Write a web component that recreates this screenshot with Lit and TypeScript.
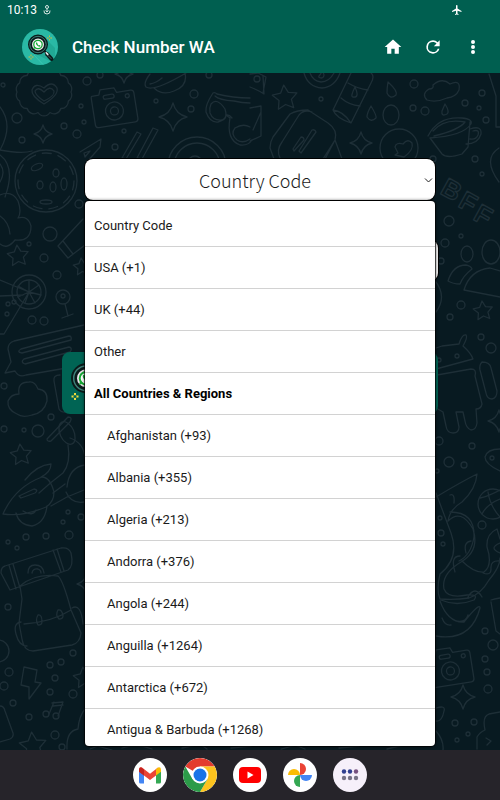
import { LitElement, html, svg, css } from "lit";
import { customElement, property, state } from "lit/decorators.js";
import { classMap } from "lit/directives/class-map.js";

type Dot = [number, number, number];

const DOTS: Dot[] = [
  [87, 81, 4], [3, 85, 2], [17, 118, 5], [64, 126, 3], [81, 106, 2], [84, 122, 2], [77, 134, 4],
  [22, 140, 3], [124, 131, 2], [115, 147, 3], [156, 101, 2], [194, 94, 4], [191, 109, 3],
  [79, 204, 4], [50, 234, 7], [29, 244, 2], [209, 75, 3], [100, 75, 3],
  [414, 84, 4], [321, 99, 2], [413, 108, 3], [425, 111, 4], [482, 93, 3], [465, 103, 3],
  [479, 108, 2], [486, 120, 3], [475, 159, 3], [482, 174, 2], [433, 159, 3], [449, 221, 5],
  [461, 236, 2], [445, 243, 4], [44, 258, 4], [57, 275, 4], [32, 320, 4], [44, 321, 4],
  [4, 386, 3], [51, 417, 3], [4, 429, 3], [24, 430, 2], [38, 431, 6], [441, 261, 3],
  [461, 305, 4], [450, 317, 3], [481, 337, 3], [491, 348, 5], [439, 441, 4], [472, 446, 3],
  [449, 462, 5], [464, 465, 3], [437, 471, 2], [8, 542, 2], [17, 548, 2], [26, 537, 3],
  [46, 536, 3], [69, 535, 4], [68, 512, 2], [63, 522, 2], [81, 517, 3], [8, 607, 3],
  [-2, 651, 11], [73, 653, 3], [61, 662, 3], [50, 665, 3], [55, 678, 3], [9, 672, 4],
  [4, 686, 4], [50, 692, 3], [73, 694, 4], [13, 703, 3], [29, 717, 3], [55, 735, 4],
  [62, 747, 3], [440, 518, 2], [441, 533, 3], [443, 544, 2], [482, 525, 4], [485, 631, 3],
  [493, 645, 5], [485, 659, 3], [487, 672, 3], [488, 689, 4], [455, 723, 3], [474, 722, 3],
  [468, 734, 2], [457, 740, 2],
];

const STARS: Dot[] = [[285, 98, 13], [18, 256, 11], [82, 267, 9], [21, 455, 11], [483, 311, 10], [33, 746, 14], [84, 678, 11]];
const SPARKS: Dot[] = [[43, 134, 9], [173, 117, 14], [361, 143, 11], [463, 697, 12], [499, 421, 11], [124, 74, 9], [86, 584, 9]];

const starPath = ([x, y, r]: Dot) => {
  const pts = Array.from({ length: 10 }, (_, i) => {
    const a = (i * Math.PI) / 5 - Math.PI / 2 - 0.1;
    const d = i % 2 ? r * 0.5 : r;
    return `${(x + d * Math.cos(a)).toFixed(1)} ${(y + d * Math.sin(a)).toFixed(1)}`;
  });
  return `M${pts.join("L")}Z`;
};

const sparkPath = ([x, y, r]: Dot) => {
  const k = r * 0.2;
  return `M${x} ${y - r}Q${x + k} ${y - k} ${x + r} ${y}Q${x + k} ${y + k} ${x} ${y + r}Q${x - k} ${y + k} ${x - r} ${y}Q${x - k} ${y - k} ${x} ${y - r}Z`;
};

const scallop = (x: number, y: number, r: number, n: number) => {
  const p = (i: number) => {
    const a = (i * 2 * Math.PI) / n;
    return `${(x + r * Math.cos(a)).toFixed(1)} ${(y + r * 0.78 * Math.sin(a)).toFixed(1)}`;
  };
  return `M${p(0)}` + Array.from({ length: n }, (_, i) => `A7 7 0 0 1 ${p(i + 1)}`).join("");
};

const camera = svg`
  <path d="M-20-15h7l2-5h14l2 5h14q3 0 3 3v26q0 3-3 3h-37q-3 0-3-3v-26q0-3 1-3Z"/>
  <rect x="-9" y="-14" width="11" height="4" rx="2"/>
  <circle cx="15" cy="-10" r="2"/><circle cy="3" r="9"/><circle cy="3" r="4"/>`;

const magnifier = svg`
  <circle cx="16" cy="15.500" r="8" fill="#eee6ee" stroke="#0a1a1a" stroke-width="4"/>
  <circle cx="16" cy="15.500" r="8.200" fill="none" stroke="#3f7f78" stroke-width="1"/>
  <circle cx="16" cy="15.500" r="4.200" fill="#fff" stroke="#16a935" stroke-width="1.300"/>
  <path d="m11.300 20 .9-3 2 2Z" fill="#16a935"/>
  <path d="M14.300 13.200q-1 1 .3 2.800t3.200 1.800l.9-.9-1.300-.9-.8.4-1.300-1.600.3-.9Z" fill="#16a935"/>
  <path d="m22.500 22 3 3" stroke="#0a1a1a" stroke-width="2"/>
  <path d="m25 25 4.500 5" stroke="#0a1a1a" stroke-width="4" stroke-linecap="round"/>
  <path d="m25 25.500 4 4" stroke="#4d6a69" stroke-width="1" stroke-linecap="round"/>
  <path d="m24.200 23.800 1.600 1.600" stroke="#e6eeee" stroke-width="1.600" stroke-linecap="round"/>`;

@customElement("doodle-wallpaper")
export class DoodleWallpaper extends LitElement {
  static styles = css`
    :host { display: block; }
    .art { display: block; width: 100%; height: 100%; }
    .lines { fill: none; stroke: #1e2f37; stroke-width: 1.3; stroke-linejoin: round; stroke-linecap: round; }
    .letters { font: 700 26px "Liberation Sans", Arial, sans-serif; }
  `;

  render() {
    return html`<svg class="art" viewBox="0 73 500 677" preserveAspectRatio="xMidYMin slice" aria-hidden="true">
      <g class="lines">
        ${DOTS.map(([x, y, r]) => svg`<circle cx=${x} cy=${y} r=${r}/>`)}
        ${STARS.map((s) => svg`<path d=${starPath(s)}/>`)}
        ${SPARKS.map((s) => svg`<path d=${sparkPath(s)}/>`)}
        <path d=${scallop(44, 92, 27, 14)}/>
        <path d="M44 104q-13-8-12-14 3-8 12-2 8-8 13 0 2 7-13 16ZM44 101q-9-6-9-10 3-5 9 1 6-7 10-1 1 5-10 10Z"/>
        <g transform="translate(114 108) rotate(-9)">${camera}</g>
        <g transform="translate(450 668) rotate(-9)">${camera}</g>
        <path d="M150 74q-7 9-4 13 8 5 40-14M150 84q6-1 12-6M154 88q8 8 20 3 14-5 11-18"/>
        <path d="M213 93q-8 12-7 19 4 11 12 10 8-2 8-7l4 3q-4 22 10 27 8 1 12-5M213 93q2-1 4 1 16 4 33 4M215 96q4 4 19 5 8 2 16 2M211 104q6-7 14 5 3 9-3 11-9 1-12-7-1-5 1-9ZM226 115q3-1 6 3M235 128q8-5 15-1M235 128q-5 6 2 12 6 4 13-1"/>
        <path d="m137 132 4 2-15 25-4-1ZM153 128l5 2-16 29-5-1ZM80 152l21-13-1 8-13 15M84 153l6-2-5 6Z"/>
        <circle cx="197" cy="166" r="29"/><circle cx="197" cy="166" r="23"/><circle cx="195" cy="163" r="7"/>
        <circle cx="46" cy="181" r="31"/><circle cx="46" cy="181" r="28" stroke-dasharray="9 7"/>
        <ellipse cx="37" cy="167" rx="6" ry="3" transform="rotate(-24 37 167)"/>
        <ellipse cx="56" cy="173" rx="3" ry="4"/><ellipse cx="40" cy="185" rx="3" ry="4"/>
        <ellipse cx="53" cy="187" rx="3" ry="5"/><ellipse cx="64" cy="184" rx="3" ry="6"/><ellipse cx="46" cy="202" rx="6" ry="2"/>
        <path d="M0 107q14 18 0 43M0 150q22 4 32 1M0 155q16 12 5 42M0 164q6 8 0 18M0 195q12-5 18 6 4 11 0 17 10-3 13 8 0 16-16 14-8 10-15 4M0 216q9 6 10 18"/>
        <path d="M250 87q8 3 14 7l-1-18M250 108l11-2v30l-11 5M253 130l8-18M250 74l8-1 8 4-3 16"/>
        <circle cx="257" cy="79" r="3"/><path d="M304 73q4 14 18 15 13-1 18-15M310 73q3 8 11 9 8 0 13-9M319 76q2-2 3-5 4 5 0 7-4 0-3-2Z"/>
        <path d="m351 73-18 37q3 8 18 13l20-40q4-7 0-10M348 83q10 6 20 7M341 98q8 7 19 8M333 110q10 1 18 13M355 87q-5 10-2 10 7 1 2-10Z"/>
        <path d="M388 82q10 9 8 13-6 5-9-2 0-5 1-11ZM371 106q6 10 5 12-5 5-9-1 0-4 4-11ZM445 104q5 8 2 10-6 3-5-3Z"/>
        <path d="M427 100q-6-6 2-11 5 0 4-4 9-8 17-1 11-5 9 6-3 7-12 8-11 5-20 2Z"/>
        <ellipse cx="391" cy="115" rx="8" ry="10"/>
        <path d="m274 159-4-11q0-6 3-11l17-23q7-4 18-4l20 13q10 7 7 17l-12 19-20 1M280 158q-4-8 2-16l17-27q5-6 13-3M325 159l10-19 7 19M293 149l8-12q3 0 3 3l-10 11ZM299 151l13-21q3-1 4 2l-15 21Z"/>
        <circle cx="399" cy="148" r="19"/><path d="m398 153-3-6q1-5 8-3 5-6 9-1 2 7-8 14l-9-2Z"/>
        <path d="M428 136q10-20 34-18 11 1 9 6-8 12-41 14l12 16q5 5 20 0l6-7 2-25M433 131q11-13 32-9-6 8-31 14M470 129q12-4 11 5-3 10-15 10M473 131q7-2 5 4-2 5-8 4"/>
        <path d="m489 74 7 22v31h4M499 148q-17 11 0 34"/>
        <text class="letters" transform="translate(439 193) rotate(29)">B</text>
        <text class="letters" transform="translate(457 206) rotate(29)">F</text>
        <text class="letters" transform="translate(472 219) rotate(29)">F</text>
        <path d="m58 246 25-27M58 246l10 12 17-13M63 241l10 13"/>
        <circle cx="29" cy="292" r="17"/><circle cx="29" cy="292" r="12"/>
        <path d="M29 292V280M29 292l10-7M29 292l12 3M29 292l6 11M29 292l-4 11M29 292l-11 5M29 292l-11-6M0 280l29 12-25 42H0M0 296l23-1"/>
        <circle cx="8" cy="304" r="2"/><circle cx="14" cy="302" r="2"/><circle cx="7" cy="314" r="2"/>
        <circle cx="63" cy="297" r="7"/><circle cx="63" cy="296" r="2"/><path d="m65 304 3 12M62 318l11-4"/>
        <path d="M84 325 14 341q-6 2-6 8l3 13-6 11 10-2q4 7 11 4l58-10M21 349l48-13q3 0 2 4l-49 13q-6-1-1-4ZM24 359l45-12q4 1 1 5l-45 12q-5-2-1-5Z"/>
        <path d="M17 414q-10-4-9-13 3-7 11-7-2-12 10-12 6-1 9 7 10 1 9 12-3 12-15 14-10 3-15-1Z"/>
        <path d="M60 375q-7 0-6 6l5 28q2 4 9 3"/>
        <ellipse cx="67" cy="433" rx="7" ry="12" transform="rotate(-25 67 433)"/><path d="M47 439 68 417q5 0 2 5L51 441q-4 1-4-2ZM68 445q3 18-5 28-12 9-24 20M70 438q14 5 15 20M67 487q2-20 18-22"/>
        <path d="M3 514q12-27 39-37 8 0 12 15 0 10-8 15Q22 517 3 514ZM25 480q12-15 26-16 0 8-10 13M19 496l15-7q5 1 1 4l-14 5ZM16 513q3 12 16 13 13-3 15-20M23 511q10 6 13-1M51 506l16-9 17-7M66 492q5 12 18 10M53 493l12-9"/>
        <path d="m1 573 9 17 58-20q6-4 3-17-2-6-10-5L5 566q-4 1-4 7ZM9 565l7 24M13 564l7 24M53 550l8 22M57 549l7 22M22 599l-2-13q15-13 38-10 5 4 13 34l10 23q-1 10-9 12l-39 6q-9 0-11-12l-3-16ZM24 624q28-2 47-14M38 615q4-1 4 7 0 3-4 3-3-5 0-10ZM58 610q4-1 5 6 0 3-4 3-4-4-1-9ZM21 622q-8 1-5 12 3 12 11 12M72 608q9-5 11 16M28 573q0-8 7-8 8 0 9 8M32 573q1-5 6-4 3 1 3 4"/>
        <path d="m24 667 13 3-2 12 6 1-12 16v-12l-8-2ZM52 703l11-1-5 14M54 702l-5 12M53 706l10-1"/><circle cx="46" cy="714" r="3"/><circle cx="56" cy="716" r="3"/>
        <path d="M0 706q4 0 5 5l8 22q1 4-3 6l-10 3M67 749q-1-18 11-20 1-13 7-20"/>
        <ellipse cx="467" cy="254" rx="6" ry="8"/><ellipse cx="491" cy="252" rx="9" ry="12"/>
        <path d="M448 281q5-16 18-16 5 1 6 4-9 7-12 15-7 0-12-3ZM464 290q6-20 26-22l10 3M464 290l36 7M436 282q11 15 0 30"/>
        <path d="m436 348 6-2 17-2q3-10 7-9 2 2-3 11 8 7 10 13l-37 10M437 375l34-6q6 0 4 7l7 28q-1 5-6 5l1 14q-1 7-6 7-5-2-6-9l-2-9h-7l3 15q0 6-6 6t-7-7l-3-14-7-4M482 362q8 0 9 6l6 23q0 7-5 8-5 0-6-6l-6-23q-1-5 2-8Z"/>
        <circle cx="457" cy="356" r="2"/><circle cx="439" cy="360" r="2"/>
        <path d="M500 471q-15-7-15-14 2-8 15-8"/><circle cx="492" cy="458" r="2"/>
        <path d="M436 497q25-15 41-23-1 15-15 28-12 7-14 19 13-13 25 8 7 22-12 33-20 12-17 27 4 10 23 6 12-1 7 5-17 7-33 0M450 495q5-2 4 8M450 512q25 0 24 25-3 18-15 24M436 493l15 40q9 25-11 41-4 16 0 25 16 1 29-1 12-4 20-18 11-13 11-22M462 561q12 12 22 11 9-7 3-25-1-13 10-18l3 10M455 572q-5-16 5-16M466 553q-3-11 5-12M468 597q7-12 14 0M440 601q8 22 24 21 16-20 16-14-9 34-44 28M442 618q3 8 9 7M456 621q10 2 12-6M500 543q-12 5 0 10M500 561q-10-1-9 8 0 7-8 4"/>
        <circle cx="493" cy="504" r="15"/><path d="M480 498q9-2 20-8M488 492q2 14 12 25M482 514q5-10 18-15M491 600q3-1 9-2M491 602l5 29 4 3"/>
        <path d="M436 708q10-3 8 3-2 11-8 10M436 731q8 9 7 19M477 749v-12q3-5 8-7-3-14 4-16l11-2M486 738l5 3-4 4"/>
        <path d="m90 749 8-3 14 4m10-2q15-5 30 1m30-1 18-4 7 5m24-1 20-2m30 3 14-4 10 4m34-1 20-2m28 3 16-4"/>
      </g>
    </svg>`;
  }
}

@customElement("app-bar")
export class AppBar extends LitElement {
  static styles = css`
    :host { display: block; background: #005f50; color: #fff; font-family: Roboto, "Open Sans", sans-serif; }
    .status { display: flex; align-items: center; gap: 6px; height: 20px; padding: 0 37px 0 7px; font-size: 12px; }
    .gesture { width: 8px; height: 10px; }
    .plane { width: 12px; height: 12px; margin-left: auto; }
    .bar { display: flex; align-items: center; height: 53px; padding: 0 7px 0 22px; }
    .logo { width: 36px; height: 36px; flex: none; }
    .title { flex: 1; margin: 0 0 0 14px; font-size: 17px; line-height: 24px; font-weight: 500; white-space: nowrap; }
    .action { display: grid; place-items: center; width: 40px; height: 40px; padding: 0; border: 0; background: none; color: inherit; }
    .icon { width: 20px; height: 20px; fill: currentColor; }
  `;

  render() {
    const action = (label: string, d: string) => html`
      <button class="action" aria-label=${label}><svg class="icon" viewBox="0 0 24 24"><path d=${d}/></svg></button>`;
    return html`
      <div class="status">
        <time>10:13</time>
        <svg class="gesture" viewBox="0 0 8 10" fill="none" stroke="#d5e6e2" aria-hidden="true">
          <circle cx="4" cy="2" r="1.500"/><path d="M4 4v3M2.500 5.500 4 7l1.500-1.500M1 5.500Q.5 9 4 9t3-3.500"/>
        </svg>
        <svg class="plane" viewBox="0 0 24 24" fill="#fff" aria-hidden="true"><path d="M21 16v-2l-8-5V3.500a1.500 1.500 0 0 0-3 0V9l-8 5v2l8-2.500V19l-2 1.500V22l3.500-1 3.500 1v-1.500L13 19v-5.500l8 2.500Z"/></svg>
      </div>
      <header class="bar">
        <svg class="logo" viewBox="0 0 36 36" aria-hidden="true">
          <circle cx="18" cy="18" r="18" fill="#2ab9a5"/>
          <path d="M23 9 33 19v8l-5 5-18-9Z" fill="#21a995"/><path d="m12 26 9 9.500" stroke="#3cc7b4"/>
          ${magnifier}
          <path d="M27.500 6.500v5M25 9h5M9 25.500v5M6.500 28h5" stroke="#d3bb36"/>
          <circle cx="27.500" cy="9" r="1" fill="#2ab9a5"/><circle cx="9" cy="28" r="1" fill="#2ab9a5"/>
        </svg>
        <h1 class="title">Check Number WA</h1>
        ${action("Home", "M10 20v-6h4v6h5v-8h3L12 3 2 12h3v8z")}
        ${action("Refresh", "M17.650 6.350A7.960 7.960 0 0 0 12 4a8 8 0 1 0 7.730 10h-2.080A6 6 0 1 1 12 6c1.660 0 3.140.69 4.220 1.780L13 11h7V4l-2.350 2.350z")}
        ${action("More options", "M12 8.500a2.400 2.400 0 1 0 0-4.800 2.400 2.400 0 0 0 0 4.800zm0 1.100a2.400 2.400 0 1 0 0 4.800 2.400 2.400 0 0 0 0-4.800zm0 5.900a2.400 2.400 0 1 0 0 4.800 2.400 2.400 0 0 0 0-4.800z")}
      </header>`;
  }
}

interface Entry { label: string; kind?: "group" | "child"; }

const ENTRIES: Entry[] = [
  { label: "Country Code" },
  { label: "USA (+1)" },
  { label: "UK (+44)" },
  { label: "Other" },
  { label: "All Countries & Regions", kind: "group" },
  { label: "Afghanistan (+93)", kind: "child" },
  { label: "Albania (+355)", kind: "child" },
  { label: "Algeria (+213)", kind: "child" },
  { label: "Andorra (+376)", kind: "child" },
  { label: "Angola (+244)", kind: "child" },
  { label: "Anguilla (+1264)", kind: "child" },
  { label: "Antarctica (+672)", kind: "child" },
  { label: "Antigua & Barbuda (+1268)", kind: "child" },
];

@customElement("country-menu")
export class CountryMenu extends LitElement {
  @property({ attribute: false }) entries: Entry[] = [];

  static styles = css`
    :host { display: block; box-sizing: border-box; overflow: hidden; padding-top: 4px; background: #fff; border-radius: 4px; box-shadow: 0 0 0 1px #00000099, 0 0 3px 1px #00000080; font-family: Roboto, "Open Sans", sans-serif; }
    .row { display: flex; align-items: center; box-sizing: border-box; width: 100%; height: 42px; padding: 0 9px; border: 0; border-bottom: 1px solid #d2d2d2; background: none; color: #1a1a1a; font-family: inherit; font-size: 13px; font-weight: 400; text-align: left; }
    .child { padding-left: 22px; }
    .group { font-weight: 700; color: #000; }
  `;

  private pick(label: string) {
    this.dispatchEvent(new CustomEvent("pick", { detail: label }));
  }

  render() {
    return html`<div role="listbox" aria-label="Country Code">
      ${this.entries.map((e) => e.kind === "group"
        ? html`<div class="row group" role="presentation">${e.label}</div>`
        : html`<button type="button" role="option" class=${classMap({ row: true, child: e.kind === "child" })} @click=${() => this.pick(e.label)}>${e.label}</button>`)}
    </div>`;
  }
}

@customElement("task-bar")
export class TaskBar extends LitElement {
  static styles = css`
    :host { display: block; background: #26242a; }
    .apps { display: flex; justify-content: center; align-items: center; gap: 16px; height: 50px; }
    .app { display: grid; place-items: center; width: 34px; height: 34px; padding: 0; border: 0; border-radius: 50%; background: #fff; overflow: hidden; }
    .drawer { background: #f6f0fa; }
    .art { width: 34px; height: 34px; }
  `;

  render() {
    return html`<nav class="apps" aria-label="Apps">
      <button class="app" aria-label="Gmail"><svg class="art" viewBox="0 0 34 34">
        <path d="M6 13v11q0 1.500 1.500 1.500h3.500V16Z" fill="#4285f4"/><path d="M28 13v11q0 1.500-1.500 1.500H23V16Z" fill="#34a853"/>
        <path d="M6 13.700v-2q0-3 3-2.200l8 6.200 8-6.200L23 17.500l-6 4.500-6-4.500Z" fill="#ea4335"/>
        <path d="M6 13.700v-2q0-2 2-2.400l3 2.200v6Z" fill="#c5221f"/><path d="M23 11.200v6.300l5-3.800v-2q0-3-3-2.200Z" fill="#fbbc04"/>
      </svg></button>
      <button class="app" aria-label="Chrome"><svg class="art" viewBox="0 0 34 34">
        <path d="M17 17 2.300 8.500A17 17 0 0 1 31.700 8.500H17Z" fill="#e33b2e"/>
        <path d="M17 8.500h14.700A17 17 0 0 1 17 34l7.400-12.700Z" fill="#fcc31e"/>
        <path d="M9.600 21.300 2.300 8.500A17 17 0 0 0 17 34l7.400-12.700Z" fill="#2c9b49"/>
        <circle cx="17" cy="17" r="8.500" fill="#fff"/><circle cx="17" cy="17" r="6.500" fill="#1a73e8"/>
      </svg></button>
      <button class="app" aria-label="YouTube"><svg class="art" viewBox="0 0 34 34">
        <rect x="6" y="9" width="22" height="16" rx="4" fill="#f00"/><path d="m14.500 13.500 6 3.500-6 3.500Z" fill="#fff"/>
      </svg></button>
      <button class="app" aria-label="Photos"><svg class="art" viewBox="0 0 34 34">
        <path d="M17 5a6 6 0 0 1 0 12Z" fill="#ea4335"/><path d="M29 17a6 6 0 0 1-12 0Z" fill="#4285f4"/>
        <path d="M17 29a6 6 0 0 1 0-12Z" fill="#34a853"/><path d="M5 17a6 6 0 0 1 12 0Z" fill="#fbbc04"/>
      </svg></button>
      <button class="app drawer" aria-label="All apps"><svg class="art" viewBox="0 0 34 34">
        ${["#303f8f", "#303f8f", "#76517f", "#777386", "#777386", "#777386"].map((c, i) =>
          svg`<circle cx=${11 + (i % 3) * 6} cy=${i < 3 ? 13.5 : 20} r="2.200" fill=${c}/>`)}
      </svg></button>
    </nav>`;
  }
}

@customElement("app-root")
export class AppRoot extends LitElement {
  @state() private code = "Country Code";
  @state() private open = true;

  static styles = css`
    :host { display: flex; flex-direction: column; min-height: 100vh; background: #081a21; }
    .main { position: relative; flex: 1; }
    .wallpaper { position: absolute; inset: 0; }
    .form { position: relative; padding: 86px 62px 0; }
    .picker { position: relative; margin: 0 3px 0 23px; }
    .select { display: block; box-sizing: border-box; width: 100%; height: 41px; padding: 0 20px 0 10px; appearance: none; border: 0; border-radius: 8px; background: #fff; color: #1a1a1a; font: 300 18px "Noto Sans CJK SC", "Open Sans", sans-serif; text-align: center; text-align-last: center; outline: 0; box-shadow: 0 0 0 1px #000; }
    .chevron { position: absolute; right: 2px; top: 18px; width: 9px; height: 7px; pointer-events: none; }
    .number { display: block; box-sizing: border-box; width: calc(100% - 23px); height: 41px; margin: 40px 0 0 23px; border: 0; border-radius: 8px; background: #f5f5f5; box-shadow: 0 0 0 1px #000; }
    .check { display: block; width: 100%; height: 62px; margin-top: 71px; padding: 0 8px; border: 0; border-radius: 8px; background: #006454; text-align: left; }
    .lens { width: 46px; height: 52px; }
    .menu { position: absolute; top: 128px; bottom: 4px; left: 85px; right: 65px; }
    .hidden { display: none; }
  `;

  private choose(e: CustomEvent<string>) {
    this.code = e.detail;
    this.open = false;
  }

  render() {
    return html`
      <app-bar></app-bar>
      <main class="main">
        <doodle-wallpaper class="wallpaper"></doodle-wallpaper>
        <form class="form" @submit=${(e: Event) => e.preventDefault()}>
          <div class="picker">
            <select class="select" aria-label="Country Code" .value=${this.code}>
              ${ENTRIES.filter((e) => e.kind !== "group").map((e) => html`<option ?selected=${e.label === this.code}>${e.label}</option>`)}
            </select>
            <svg class="chevron" viewBox="0 0 9 7" fill="none" stroke="#222" aria-hidden="true"><path d="m1 1.500 3.500 3.500L8 1.500"/></svg>
          </div>
          <input class="number" type="tel" aria-label="Number">
          <button class="check" aria-label="Check number">
            <svg class="lens" viewBox="0 0 46 52" aria-hidden="true">
              <g transform="translate(-8 -1) scale(1.5)">${magnifier}</g>
              <path d="M5 37v7M1.500 40.500h7" stroke="#f0dc3c" stroke-width="2"/><circle cx="5" cy="40.500" r="1.500" fill="#006454"/>
            </svg>
          </button>
        </form>
        <country-menu class=${classMap({ menu: true, hidden: !this.open })} .entries=${ENTRIES} @pick=${this.choose}></country-menu>
      </main>
      <task-bar></task-bar>`;
  }
}
